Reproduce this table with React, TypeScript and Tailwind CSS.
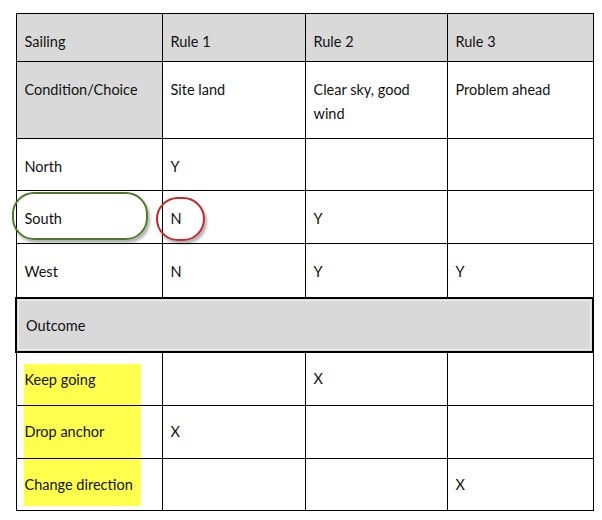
import React from 'react';

type Row = {
  cells: string[];
  h: string;
  gray?: number[];
};

const rows: Row[] = [
  { cells: ['Sailing', 'Rule 1', 'Rule 2', 'Rule 3'], h: 'h-[48px]', gray: [0, 1, 2, 3] },
  { cells: ['Condition/Choice', 'Site land', 'Clear sky, good wind', 'Problem ahead'], h: 'h-[77px]', gray: [0] },
  { cells: ['North', 'Y', '', ''], h: 'h-[52px]' },
  { cells: ['South', 'N', 'Y', ''], h: 'h-[53px]' },
  { cells: ['West', 'N', 'Y', 'Y'], h: 'h-[54px]' },
];

const outcomes = [
  { label: 'Keep going', marks: ['', 'X', ''], h: 'h-[53px]', hl: 'mt-[11px] h-[41px] pt-[4px]' },
  { label: 'Drop anchor', marks: ['X', '', ''], h: 'h-[53px]', hl: 'h-[52px] pt-[14px]' },
  { label: 'Change direction', marks: ['', '', 'X'], h: 'h-[52px]', hl: 'h-[47px] pt-[14px]' },
];

const cell = 'border border-black align-top px-2 leading-[24px]';

export default function App() {
  return (
    <div className="w-[602px] h-[520px] bg-white pt-[13px] pl-[15px] font-['Lato',sans-serif] text-[14.5px] text-[#111]">
      <div className="relative w-[577px]">
        <table className="w-[577px] table-fixed border-collapse">
          <colgroup>
            <col className="w-[146px]" />
            <col className="w-[143px]" />
            <col className="w-[142px]" />
            <col className="w-[146px]" />
          </colgroup>
          <tbody>
            {rows.map((r, i) => (
              <tr key={i} className={r.h}>
                {r.cells.map((c, j) => (
                  <td key={j} className={`${cell} pt-[16px] ${r.gray?.includes(j) ? 'bg-[#d9d9d9]' : 'bg-white'}`}>
                    {c}
                  </td>
                ))}
              </tr>
            ))}
            <tr className="h-[54px]">
              <td colSpan={4} className="border-2 border-black p-0 bg-[#d9d9d9]">
                <div className="h-[50px] border border-[#ededed] m-px px-[7px] pt-[13px] leading-[24px]">
                  Outcome
                </div>
              </td>
            </tr>
            {outcomes.map((o) => (
              <tr key={o.label} className={o.h}>
                <td className="border border-black align-top p-0 pl-[7px] leading-[24px]">
                  <div className={`w-[117px] bg-[#ffff4d] px-[1px] ${o.hl}`}>
                    {o.label}
                  </div>
                </td>
                {o.marks.map((m, j) => (
                  <td key={j} className={`${cell} pt-[14px]`}>
                    {m}
                  </td>
                ))}
              </tr>
            ))}
          </tbody>
        </table>

        {/* annotations drawn over the table */}
        <div className="absolute left-[-3px] top-[179px] w-[136px] h-[48px] rounded-[22px] border-2 border-[#4e7a2c] shadow-[2px_3px_3px_rgba(0,0,0,0.3)]" />
        <div className="absolute left-[141px] top-[184px] w-[49px] h-[44px] rounded-full border-2 border-[#c0282d] shadow-[2px_3px_3px_rgba(0,0,0,0.3)]" />
      </div>
    </div>
  );
}
